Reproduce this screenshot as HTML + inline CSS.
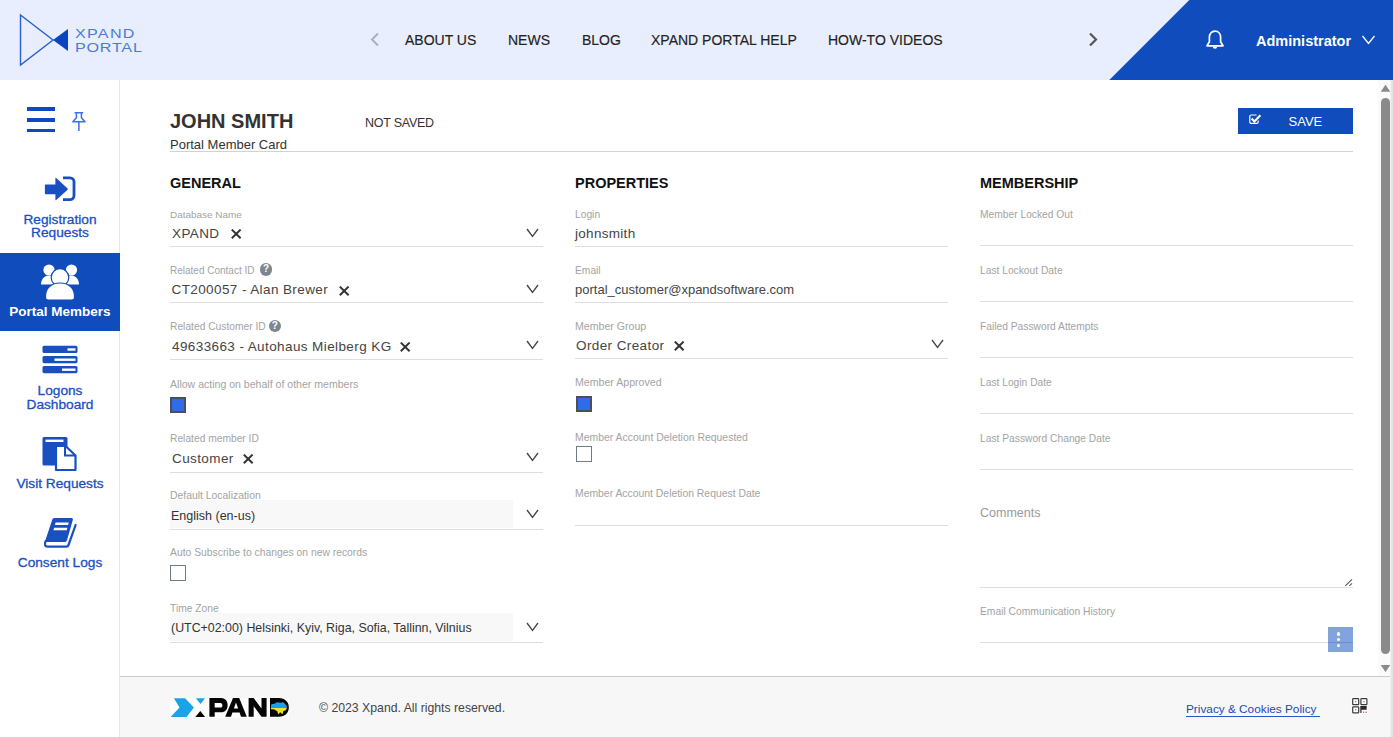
<!DOCTYPE html>
<html><head><meta charset="utf-8">
<style>
*{margin:0;padding:0;box-sizing:border-box}
html,body{width:1393px;height:737px;overflow:hidden;background:#fff;font-family:"Liberation Sans",sans-serif;color:#333}
.abs{position:absolute}
.t{position:absolute;white-space:nowrap;line-height:1}
#hdr{position:absolute;left:0;top:0;width:1393px;height:80px;background:#e8eefd}
#blue{position:absolute;left:0;top:0;width:1393px;height:80px;background:#104cbb;clip-path:polygon(1189.3px 0,1393px 0,1393px 80px,1109.3px 80px)}
.nav{position:absolute;top:32px;font-size:14px;color:#222;white-space:nowrap;letter-spacing:0;-webkit-text-stroke:0.15px #222}
#side{position:absolute;left:0;top:80px;width:120px;height:657px;background:#fff;border-right:1px solid #e6e6e6}
#foot{position:absolute;left:120px;top:676px;width:1273px;height:61px;background:#f7f7f7;border-top:1px solid #cbcbcb}
</style></head><body>
<div id="hdr"></div>
<div id="blue"></div>
<svg class="abs" style="left:0;top:0" width="150" height="80">
<polygon points="20.5,15 53,40 20.5,65" fill="none" stroke="#2a5fd0" stroke-width="1.4" stroke-linejoin="miter"/>
<polygon points="53,40 68,29 68,51" fill="#0a46bf"/>
</svg>
<div class="abs" style="left:75px;top:28px;font-size:12.6px;line-height:13px;color:#4a7ada;letter-spacing:1px;transform:scaleX(1.28);transform-origin:0 0">XPAND</div>
<div class="abs" style="left:75px;top:42px;font-size:12.6px;line-height:13px;color:#4a7ada;letter-spacing:0.6px;transform:scaleX(1.28);transform-origin:0 0">PORTAL</div>
<svg class="abs" style="left:368px;top:32px" width="14" height="16"><polyline points="10,1.5 4,7.5 10,13.5" fill="none" stroke="#a9b0bd" stroke-width="2"/></svg>
<div class="nav" style="left:405px">ABOUT US</div>
<div class="nav" style="left:508px">NEWS</div>
<div class="nav" style="left:582px">BLOG</div>
<div class="nav" style="left:651px">XPAND PORTAL HELP</div>
<div class="nav" style="left:828px">HOW-TO VIDEOS</div>
<svg class="abs" style="left:1086px;top:32px" width="14" height="16"><polyline points="4,1.5 10,7.5 4,13.5" fill="none" stroke="#555" stroke-width="2.2"/></svg>
<svg class="abs" style="left:1204px;top:29px" width="22" height="22" viewBox="0 0 22 22">
<path d="M11 2.2c-3.6 0-5.6 2.8-5.6 6v4.6L3 16.8h16l-2.4-4V8.2c0-3.2-2-6-5.6-6z" fill="none" stroke="#fff" stroke-width="1.7" stroke-linejoin="round"/>
<path d="M8.8 17.6a2.2 2.2 0 0 0 4.4 0z" fill="#fff"/>
</svg>
<div class="abs" style="left:1256px;top:33px;font-size:14.5px;font-weight:bold;color:#fff;white-space:nowrap">Administrator</div>
<svg class="abs" style="left:1361px;top:34px" width="16" height="12"><polyline points="1.5,2 7.5,9.5 13.5,2" fill="none" stroke="#fff" stroke-width="1.3"/></svg>
<div id="side"></div>
<div class="abs" style="left:27px;top:107px;width:28px;height:3.6px;background:#0f48c0"></div>
<div class="abs" style="left:27px;top:118px;width:28px;height:3.6px;background:#0f48c0"></div>
<div class="abs" style="left:27px;top:128.5px;width:28px;height:3.6px;background:#0f48c0"></div>
<svg class="abs" style="left:70px;top:110px" width="18" height="22" viewBox="0 0 18 22">
<path d="M4.6 2.8h8.6M6.4 3.5v4.3L2.8 11.8h12.2L11.4 7.8V3.5M8.9 12.3V21" fill="none" stroke="#3d70e0" stroke-width="1.5" stroke-linejoin="round"/>
</svg>
<svg class="abs" style="left:44px;top:176px" width="32" height="27" viewBox="0 0 32 27">
<path d="M1.6 8.5h9.8V2.4q0-1 .8-.4l11.4 10.6q.5.6 0 1.1L12.2 24q-.8.6-.8-.4v-5.3H1.6q-.7 0-.7-.7V9.2q0-.7.7-.7z" fill="#1a4fc2"/>
<path d="M19 1.8h7a4 4 0 0 1 4 4v13.8a4 4 0 0 1-4 4h-7" fill="none" stroke="#1a4fc2" stroke-width="2.8"/>
</svg>
<div class="t" style="left:0;width:120px;text-align:center;top:212.55px;font-size:13.7px;color:#1a4fc2;font-weight:normal;-webkit-text-stroke:0.3px #1a4fc2">Registration</div>
<div class="t" style="left:0;width:120px;text-align:center;top:226.35px;font-size:13.7px;color:#1a4fc2;font-weight:normal;-webkit-text-stroke:0.3px #1a4fc2">Requests</div>
<div class="abs" style="left:0;top:253px;width:120px;height:78px;background:#104cbb"></div>
<svg class="abs" style="left:38px;top:262px" width="44" height="40" viewBox="0 0 44 40">
<circle cx="11" cy="8" r="5.6" fill="#fff"/>
<circle cx="33.5" cy="8" r="5.6" fill="#fff"/>
<path d="M3 22.5c0-5 3-9 8-9s8 4 8 9z" fill="#fff"/>
<path d="M25 22.5c0-5 3-9 8-9s8 4 8 9z" fill="#fff"/>
<circle cx="22" cy="15.5" r="8.8" fill="#fff" stroke="#104cbb" stroke-width="1.2"/>
<path d="M7.5 34c0-8 6-13 14.5-13s14.5 5 14.5 13v1.5a2.5 2.5 0 0 1-2.5 2.5h-24a2.5 2.5 0 0 1-2.5-2.5z" fill="#fff" stroke="#104cbb" stroke-width="1.2"/>
</svg>
<div class="t" style="left:0;width:120px;text-align:center;top:305.43px;font-size:13.5px;color:#fff;font-weight:bold;-webkit-text-stroke:0px #fff">Portal Members</div>
<svg class="abs" style="left:42px;top:345px" width="36" height="29" viewBox="0 0 36 29">
<rect x="0.5" y="0.8" width="35" height="7.2" rx="1.6" fill="#1a4fc2"/>
<rect x="0.5" y="11" width="35" height="7.2" rx="1.6" fill="#1a4fc2"/>
<rect x="0.5" y="21" width="35" height="7.2" rx="1.6" fill="#1a4fc2"/>
<rect x="25.5" y="3.3" width="8" height="2.4" fill="#fff"/>
<rect x="12.5" y="13.5" width="21" height="2.4" fill="#fff"/>
<rect x="20" y="23.5" width="13.5" height="2.4" fill="#fff"/>
</svg>
<div class="t" style="left:0;width:120px;text-align:center;top:384.26px;font-size:13.7px;color:#1a4fc2;font-weight:normal;-webkit-text-stroke:0.3px #1a4fc2">Logons</div>
<div class="t" style="left:0;width:120px;text-align:center;top:397.76px;font-size:13.7px;color:#1a4fc2;font-weight:normal;-webkit-text-stroke:0.3px #1a4fc2">Dashboard</div>
<svg class="abs" style="left:42px;top:436px" width="36" height="36" viewBox="0 0 36 36">
<rect x="0.5" y="1" width="25" height="28.5" rx="1.5" fill="#1a4fc2"/>
<rect x="3.5" y="3.6" width="18" height="2.4" fill="#fff"/>
<path d="M14 10h9.5l10 9.5V34H14z" fill="#fff" stroke="#1a4fc2" stroke-width="2.2" stroke-linejoin="round"/>
<path d="M23 10.5v9h10" fill="none" stroke="#1a4fc2" stroke-width="2"/>
</svg>
<div class="t" style="left:0;width:120px;text-align:center;top:476.96px;font-size:13.7px;color:#1a4fc2;font-weight:normal;-webkit-text-stroke:0.3px #1a4fc2">Visit Requests</div>
<svg class="abs" style="left:43px;top:516px" width="35" height="34" viewBox="0 0 35 34">
<path d="M11.2 1.9H28.3Q30.4 1.9 29.8 4L24 24.3Q23.5 26 21.8 26H1.8L9.3 3.6Q9.8 1.9 11.2 1.9Z" fill="#1a4fc2"/>
<path d="M2.6 25.2Q0.6 30.6 4.6 30.6H23.3Q24.9 30.6 25.5 29L32.6 9" fill="none" stroke="#1a4fc2" stroke-width="2.2" stroke-linecap="round" stroke-linejoin="round"/>
<polygon points="12.6,6.5 25.8,6.5 25.1,9 11.9,9" fill="#fff"/>
<polygon points="11.1,11.7 24.4,11.7 23.7,14.2 10.4,14.2" fill="#fff"/>
</svg>
<div class="t" style="left:0;width:120px;text-align:center;top:555.75px;font-size:13.7px;color:#1a4fc2;font-weight:normal;-webkit-text-stroke:0.3px #1a4fc2">Consent Logs</div>
<div class="t " style="left:170px;top:111.30px;font-size:20px;color:#333;font-weight:bold;letter-spacing:0px;">JOHN SMITH</div>
<div class="t " style="left:365px;top:116.97px;font-size:12.5px;color:#333;font-weight:normal;letter-spacing:-0.25px;">NOT SAVED</div>
<div class="t " style="left:170px;top:138.05px;font-size:13px;color:#333;font-weight:normal;letter-spacing:0px;">Portal Member Card</div>
<div class="abs" style="left:170px;top:151px;width:1183px;height:1px;background:#cfd3d9"></div>
<div class="abs" style="left:1238px;top:108px;width:115px;height:26px;background:#104cbb"></div>
<svg class="abs" style="left:1248px;top:113px" width="14" height="12" viewBox="0 0 14 12">
<path d="M8.6 2H3.2a1.4 1.4 0 0 0-1.4 1.4v5.6a1.4 1.4 0 0 0 1.4 1.4h5.6a1.4 1.4 0 0 0 1.4-1.4V7.5" fill="none" stroke="#fff" stroke-width="1.2"/>
<path d="M3.6 5.6l2.8 2.8 6-6.2" fill="none" stroke="#fff" stroke-width="2.1"/>
</svg>
<div class="t " style="left:1288.5px;top:114.55px;font-size:13px;color:#fff;font-weight:normal;letter-spacing:0px;">SAVE</div>
<div class="t " style="left:170px;top:175.68px;font-size:14.5px;color:#111;font-weight:bold;letter-spacing:0px;">GENERAL</div>
<div class="t " style="left:575px;top:175.68px;font-size:14.5px;color:#111;font-weight:bold;letter-spacing:0px;">PROPERTIES</div>
<div class="t " style="left:980px;top:175.68px;font-size:14.5px;color:#111;font-weight:bold;letter-spacing:0px;">MEMBERSHIP</div>
<div class="t " style="left:170px;top:209.84px;font-size:9.95px;color:#a3a3a3;font-weight:normal;letter-spacing:0px;">Database Name</div>
<div class="t " style="left:172px;top:226.93px;font-size:13.5px;color:#444;font-weight:normal;letter-spacing:0.4px;">XPAND</div>
<svg class="abs" style="left:231px;top:229.3px" width="11" height="10"><path d="M0.8 0.6L9.6 9.2M9.6 0.6L0.8 9.2" stroke="#333" stroke-width="2"/></svg>
<svg class="abs" style="left:526px;top:228px" width="14" height="10"><polyline points="1,1 6.5,8.5 12,1" fill="none" stroke="#444" stroke-width="1.3"/></svg>
<div class="abs" style="left:170px;top:246px;width:373px;height:1px;background:#dcdee3"></div>
<div class="t " style="left:170px;top:265.90px;font-size:10px;color:#a3a3a3;font-weight:normal;letter-spacing:0px;">Related Contact ID</div>
<div class="abs" style="left:259.8px;top:263px;width:12.5px;height:12.5px;border-radius:50%;background:#7d8690;color:#fff;font-size:10px;font-weight:bold;line-height:12.5px;text-align:center">?</div>
<div class="t " style="left:171.5px;top:282.73px;font-size:13.5px;color:#444;font-weight:normal;letter-spacing:0.4px;">CT200057 - Alan Brewer</div>
<svg class="abs" style="left:339px;top:285.8px" width="11" height="10"><path d="M0.8 0.6L9.6 9.2M9.6 0.6L0.8 9.2" stroke="#333" stroke-width="2"/></svg>
<svg class="abs" style="left:526px;top:284px" width="14" height="10"><polyline points="1,1 6.5,8.5 12,1" fill="none" stroke="#444" stroke-width="1.3"/></svg>
<div class="abs" style="left:170px;top:302px;width:373px;height:1px;background:#dcdee3"></div>
<div class="t " style="left:170px;top:322.29px;font-size:10.25px;color:#a3a3a3;font-weight:normal;letter-spacing:0px;">Related Customer ID</div>
<div class="abs" style="left:268.5px;top:319.5px;width:12.5px;height:12.5px;border-radius:50%;background:#7d8690;color:#fff;font-size:10px;font-weight:bold;line-height:12.5px;text-align:center">?</div>
<div class="t " style="left:172px;top:339.62px;font-size:13.5px;color:#444;font-weight:normal;letter-spacing:0.4px;">49633663 - Autohaus Mielberg KG</div>
<svg class="abs" style="left:400px;top:342.3px" width="11" height="10"><path d="M0.8 0.6L9.6 9.2M9.6 0.6L0.8 9.2" stroke="#333" stroke-width="2"/></svg>
<svg class="abs" style="left:526px;top:340px" width="14" height="10"><polyline points="1,1 6.5,8.5 12,1" fill="none" stroke="#444" stroke-width="1.3"/></svg>
<div class="abs" style="left:170px;top:358.5px;width:373px;height:1px;background:#dcdee3"></div>
<div class="t " style="left:170px;top:378.53px;font-size:10.55px;color:#a3a3a3;font-weight:normal;letter-spacing:0px;">Allow acting on behalf of other members</div>
<div class="abs" style="left:170px;top:396.5px;width:16px;height:16px;border:2px solid #4b5058;background:#2f6bea"></div>
<div class="t " style="left:170px;top:434.29px;font-size:10.25px;color:#a3a3a3;font-weight:normal;letter-spacing:0px;">Related member ID</div>
<div class="t " style="left:172px;top:451.62px;font-size:13.5px;color:#444;font-weight:normal;letter-spacing:0.4px;">Customer</div>
<svg class="abs" style="left:243px;top:453.8px" width="11" height="10"><path d="M0.8 0.6L9.6 9.2M9.6 0.6L0.8 9.2" stroke="#333" stroke-width="2"/></svg>
<svg class="abs" style="left:526px;top:452px" width="14" height="10"><polyline points="1,1 6.5,8.5 12,1" fill="none" stroke="#444" stroke-width="1.3"/></svg>
<div class="abs" style="left:170px;top:471.5px;width:373px;height:1px;background:#dcdee3"></div>
<div class="t " style="left:170px;top:490.96px;font-size:10.4px;color:#a3a3a3;font-weight:normal;letter-spacing:0px;">Default Localization</div>
<div class="abs" style="left:170px;top:500px;width:343px;height:28px;background:#f8f8f8"></div>
<div class="t " style="left:171px;top:509.88px;font-size:12.5px;color:#333;font-weight:normal;letter-spacing:0px;">English (en-us)</div>
<svg class="abs" style="left:526px;top:509px" width="14" height="10"><polyline points="1,1 6.5,8.5 12,1" fill="none" stroke="#444" stroke-width="1.3"/></svg>
<div class="abs" style="left:170px;top:528.5px;width:373px;height:1px;background:#dcdee3"></div>
<div class="t " style="left:170px;top:548.00px;font-size:10.35px;color:#a3a3a3;font-weight:normal;letter-spacing:0px;">Auto Subscribe to changes on new records</div>
<div class="abs" style="left:170px;top:565px;width:16px;height:16px;border:1.2px solid #6f7b88;background:#fff"></div>
<div class="t " style="left:170px;top:604.09px;font-size:10.25px;color:#a3a3a3;font-weight:normal;letter-spacing:0px;">Time Zone</div>
<div class="abs" style="left:170px;top:613px;width:343px;height:28px;background:#f8f8f8"></div>
<div class="t " style="left:171px;top:622.36px;font-size:12.4px;color:#333;font-weight:normal;letter-spacing:0px;">(UTC+02:00) Helsinki, Kyiv, Riga, Sofia, Tallinn, Vilnius</div>
<svg class="abs" style="left:526px;top:622px" width="14" height="10"><polyline points="1,1 6.5,8.5 12,1" fill="none" stroke="#444" stroke-width="1.3"/></svg>
<div class="abs" style="left:170px;top:641.5px;width:373px;height:1px;background:#dcdee3"></div>
<div class="t " style="left:575px;top:209.89px;font-size:10.25px;color:#a3a3a3;font-weight:normal;letter-spacing:0px;">Login</div>
<div class="t " style="left:575px;top:226.82px;font-size:13.5px;color:#444;font-weight:normal;letter-spacing:0.3px;">johnsmith</div>
<div class="abs" style="left:575px;top:245.5px;width:373px;height:1px;background:#dcdee3"></div>
<div class="t " style="left:575px;top:265.89px;font-size:10.25px;color:#a3a3a3;font-weight:normal;letter-spacing:0px;">Email</div>
<div class="t " style="left:575px;top:283.25px;font-size:13px;color:#444;font-weight:normal;letter-spacing:0px;">portal_customer@xpandsoftware.com</div>
<div class="abs" style="left:575px;top:301.5px;width:373px;height:1px;background:#dcdee3"></div>
<div class="t " style="left:575px;top:321.29px;font-size:10.6px;color:#a3a3a3;font-weight:normal;letter-spacing:0px;">Member Group</div>
<div class="t " style="left:576px;top:338.73px;font-size:13.5px;color:#444;font-weight:normal;letter-spacing:0.4px;">Order Creator</div>
<svg class="abs" style="left:674px;top:341.3px" width="11" height="10"><path d="M0.8 0.6L9.6 9.2M9.6 0.6L0.8 9.2" stroke="#333" stroke-width="2"/></svg>
<svg class="abs" style="left:931px;top:339px" width="14" height="10"><polyline points="1,1 6.5,8.5 12,1" fill="none" stroke="#444" stroke-width="1.3"/></svg>
<div class="abs" style="left:575px;top:358px;width:373px;height:1px;background:#dcdee3"></div>
<div class="t " style="left:575px;top:377.19px;font-size:10.6px;color:#a3a3a3;font-weight:normal;letter-spacing:0px;">Member Approved</div>
<div class="abs" style="left:576px;top:396.4px;width:16px;height:16px;border:2px solid #4b5058;background:#2f6bea"></div>
<div class="t " style="left:575px;top:432.82px;font-size:10.45px;color:#a3a3a3;font-weight:normal;letter-spacing:0px;">Member Account Deletion Requested</div>
<div class="abs" style="left:576px;top:446.3px;width:16px;height:16px;border:1.2px solid #6f7b88;background:#fff"></div>
<div class="t " style="left:575px;top:488.86px;font-size:10.4px;color:#a3a3a3;font-weight:normal;letter-spacing:0px;">Member Account Deletion Request Date</div>
<div class="abs" style="left:575px;top:525.2px;width:373px;height:1px;background:#dcdee3"></div>
<div class="t " style="left:980px;top:209.89px;font-size:10.25px;color:#a3a3a3;font-weight:normal;letter-spacing:0px;">Member Locked Out</div>
<div class="abs" style="left:980px;top:244.8px;width:373px;height:1px;background:#dcdee3"></div>
<div class="t " style="left:980px;top:265.89px;font-size:10.25px;color:#a3a3a3;font-weight:normal;letter-spacing:0px;">Last Lockout Date</div>
<div class="abs" style="left:980px;top:300.8px;width:373px;height:1px;background:#dcdee3"></div>
<div class="t " style="left:980px;top:321.89px;font-size:10.25px;color:#a3a3a3;font-weight:normal;letter-spacing:0px;">Failed Password Attempts</div>
<div class="abs" style="left:980px;top:356.8px;width:373px;height:1px;background:#dcdee3"></div>
<div class="t " style="left:980px;top:377.89px;font-size:10.25px;color:#a3a3a3;font-weight:normal;letter-spacing:0px;">Last Login Date</div>
<div class="abs" style="left:980px;top:412.8px;width:373px;height:1px;background:#dcdee3"></div>
<div class="t " style="left:980px;top:433.89px;font-size:10.25px;color:#a3a3a3;font-weight:normal;letter-spacing:0px;">Last Password Change Date</div>
<div class="abs" style="left:980px;top:468.8px;width:373px;height:1px;background:#dcdee3"></div>
<div class="t " style="left:980px;top:506.98px;font-size:12.5px;color:#9a9a9a;font-weight:normal;letter-spacing:0px;">Comments</div>
<div class="abs" style="left:980px;top:587.3px;width:373px;height:1px;background:#dcdee3"></div>
<svg class="abs" style="left:1344px;top:578px" width="9" height="9"><path d="M1.3 7.8L8 1.3M5.3 7.8L8 5.3" stroke="#555" stroke-width="1.1"/></svg>
<div class="t " style="left:980px;top:606.85px;font-size:10.3px;color:#a3a3a3;font-weight:normal;letter-spacing:0px;">Email Communication History</div>
<div class="abs" style="left:980px;top:642.3px;width:373px;height:1px;background:#dcdee3"></div>
<div class="abs" style="left:1328px;top:627px;width:25px;height:25px;background:#82a3dd"></div>
<div class="abs" style="left:1328px;top:642px;width:25px;height:1px;background:#6f8fcc"></div>
<div class="abs" style="left:1336.7px;top:632.2px;width:3.6px;height:3.6px;border-radius:50%;background:#fff"></div>
<div class="abs" style="left:1336.7px;top:637.9px;width:3.6px;height:3.6px;border-radius:50%;background:#fff"></div>
<div class="abs" style="left:1336.7px;top:643.8px;width:3.6px;height:3.6px;border-radius:50%;background:#fff"></div>
<div class="abs" style="left:1378px;top:80px;width:15px;height:596px;background:#fafafa;border-left:0"></div>
<svg class="abs" style="left:1380px;top:84px" width="11" height="9"><polygon points="5.5,0.8 10.3,7.8 0.7,7.8" fill="#8a8a8a"/></svg>
<div class="abs" style="left:1381px;top:97.5px;width:9px;height:556px;border-radius:4.5px;background:#8a8a8a"></div>
<svg class="abs" style="left:1380px;top:664px" width="11" height="9"><polygon points="0.7,1 10.3,1 5.5,8" fill="#8a8a8a"/></svg>
<div id="foot"></div>
<div class="abs" style="left:170px;top:698px;width:119px;height:19.5px;background:#fff"></div>
<svg class="abs" style="left:170px;top:697px" width="120" height="21" viewBox="170 697 120 21">
<polygon points="173.9,698.2 185.1,698.2 193.9,707.5 186.5,716.9 170.6,716.9 179.5,707.5" fill="#1aa3e6"/>
<polygon points="195.8,698.2 205.1,698.2 200.5,704" fill="#1aa3e6"/>
<polygon points="195.3,716.9 205.1,716.9 200.3,711" fill="#000"/>
</svg>
<svg class="abs" style="left:205px;top:694px" width="88" height="27" viewBox="0 0 88 27">
<path fill-rule="evenodd" fill="#050505" d="M4.4 4.1H16C20.2 4.1 22.6 7 22.6 11.2C22.6 15.4 20.2 18.3 16 18.3H9.7V22.7H4.4ZM9.7 8.9H15.3C16.8 8.9 17.4 9.9 17.4 11.2C17.4 12.5 16.8 13.6 15.3 13.6H9.7Z"/>
<path fill-rule="evenodd" fill="#050505" d="M20.2 22.7L28 4.1H34.2L41.8 22.7H36L34.6 18.6H27.4L26 22.7ZM28.9 14.6H33.1L31 8.6Z"/>
<path fill="#050505" d="M43.6 22.7V4.1H48.7L56.5 14.6V4.1H61.6V22.7H56.5L48.7 12.2V22.7Z"/>
<path fill="#050505" d="M65 4.1H74C79.8 4.1 83.8 8 83.8 13.4C83.8 18.8 79.8 22.7 74 22.7H65Z"/>
<polygon fill="#1a9fe8" points="65.8,13.9 66.3,10.3 69.5,9.8 71.8,8.3 76,8.8 78,8.1 80,10 81.8,12 81.8,13.9"/>
<polygon fill="#f3e02a" points="65.8,13.9 81.8,13.9 80.8,16.2 78.5,17 77.4,20.2 75.2,18.2 73.2,20.4 72.3,17.2 69.3,15.6 66.3,15.2"/>
</svg>
<div class="t " style="left:319px;top:702.19px;font-size:12.25px;color:#444;font-weight:normal;letter-spacing:0px;">© 2023 Xpand. All rights reserved.</div>
<div class="t " style="left:1186px;top:703.57px;font-size:11.8px;color:#2447b8;font-weight:normal;letter-spacing:0px;">Privacy &amp; Cookies Policy</div>
<div class="abs" style="left:1186px;top:715.5px;width:134px;height:1.2px;background:#2a55c8"></div>
<svg class="abs" style="left:1351px;top:697px" width="18" height="18" viewBox="-1 -1 18 18">
<rect x="-0.5" y="-0.5" width="16.5" height="16.5" fill="#fff"/>
<rect x="0.7" y="0.6" width="6" height="6" rx="0.6" fill="none" stroke="#3a3a3a" stroke-width="1.2"/>
<rect x="8.9" y="0.6" width="6" height="6" rx="0.6" fill="none" stroke="#3a3a3a" stroke-width="1.2"/>
<rect x="0.7" y="8.8" width="6" height="6" rx="0.6" fill="none" stroke="#3a3a3a" stroke-width="1.2"/>
<rect x="3.1" y="3" width="1.2" height="1.2" fill="#777"/>
<rect x="11.3" y="3" width="1.2" height="1.2" fill="#777"/>
<rect x="3.1" y="11.2" width="1.2" height="1.2" fill="#777"/>
<path d="M8.3 8.1h6.4v3.6h-5.2v3.2H8.3z" fill="#2a2a2a"/>
<rect x="11" y="13.6" width="1.2" height="1.2" fill="#666"/>
<rect x="13.6" y="13.6" width="1.2" height="1.2" fill="#a33"/>
</svg>
<div class="abs" style="left:1390px;top:80px;width:1px;height:657px;background:#f0f0f0"></div><div class="abs" style="left:1391px;top:80px;width:2px;height:657px;background:#e4e4e4"></div>
</body></html>
